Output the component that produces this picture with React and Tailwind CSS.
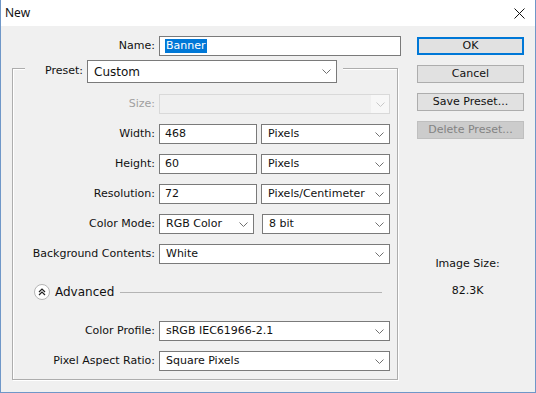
const font = { fontFamily: '"DejaVu Sans", sans-serif' }

function Chevron({ disabled }) {
  return (
    <svg width="9" height="5" viewBox="0 0 9 5" className="shrink-0">
      <path d="M0.5 0.5 L4.5 4.5 L8.5 0.5" fill="none" stroke={disabled ? '#c8c8c8' : '#707070'} strokeWidth="1" />
    </svg>
  )
}

function Select({ value, className = '' }) {
  return (
    <div className={`flex h-[20px] items-center justify-between border border-[#7a7a7a] bg-white pl-[6px] pr-[5px] ${className}`}>
      <span>{value}</span>
      <Chevron />
    </div>
  )
}

function Input({ value, className = '' }) {
  return (
    <div className={`flex h-[20px] items-center border border-[#7a7a7a] bg-white pl-[5px] ${className}`}>
      {value}
    </div>
  )
}

function Row({ label, children, muted }) {
  return (
    <div className="flex items-center gap-[4px]">
      <div className={`w-[142px] text-right ${muted ? 'text-[#a0a0a0]' : ''}`}>{label}</div>
      {children}
    </div>
  )
}

function Button({ children, primary, disabled }) {
  return (
    <div
      className={`flex h-[18px] items-center justify-center ${
        primary
          ? 'border-2 border-[#0078d7] bg-[#e1e1e1]'
          : disabled
          ? 'border border-[#bfbfbf] bg-[#cccccc] text-[#838383]'
          : 'border border-[#adadad] bg-[#e1e1e1]'
      }`}
    >
      {children}
    </div>
  )
}

export default function App() {
  return (
    <div className="h-[393px] w-[536px] overflow-hidden border border-t-0 border-[#6f97c8] bg-[#f0f0f0] text-[11px] text-[#111]" style={font}>
      <div className="flex h-[26px] items-center justify-between bg-white pl-[4px] pr-[10px] text-[12px] font-['Noto_Sans',sans-serif]">
        <span>New</span>
        <svg width="11" height="11" viewBox="0 0 11 11">
          <path d="M0.5 0.5 L10.5 10.5 M10.5 0.5 L0.5 10.5" stroke="#111" strokeWidth="1" />
        </svg>
      </div>

      <div className="flex pt-[10px]">
        <div className="w-[400px]">
          <div className="flex items-center gap-[4px]">
            <div className="w-[154px] text-right">Name:</div>
            <div className="flex h-[20px] w-[242px] items-center border border-[#7a7a7a] bg-white pl-[5px]">
              <span className="bg-[#0078d7] px-px leading-[14px] text-white">Banner</span>
            </div>
          </div>

          <div className="relative z-10 ml-[24px] mt-[4px] flex w-[318px] items-center gap-[4px] bg-[#f0f0f0]">
            <div className="w-[58px] text-right">Preset:</div>
            <div className="flex h-[23px] w-[250px] items-center justify-between border border-[#7a7a7a] bg-white pl-[6px] pr-[5px] text-[12px]">
              <span>Custom</span>
              <Chevron />
            </div>
          </div>

          <div className="-mt-[15px] ml-[11px] h-[312px] w-[386px] border border-[#adadad] pt-[25px] shadow-[inset_1px_1px_0_#fff,1px_1px_0_#fff]">
            <div className="flex flex-col gap-[10px]">
              <Row label="Size:" muted>
                <div className="flex h-[20px] w-[231px] items-center justify-end border border-[#d9d9d9] bg-[#f0f0f0]">
                  <div className="flex h-full w-[18px] items-center justify-center bg-[#f7f7f7]">
                    <Chevron disabled />
                  </div>
                </div>
              </Row>
              <Row label="Width:">
                <Input value="468" className="w-[98px]" />
                <Select value="Pixels" className="w-[129px]" />
              </Row>
              <Row label="Height:">
                <Input value="60" className="w-[98px]" />
                <Select value="Pixels" className="w-[129px]" />
              </Row>
              <Row label="Resolution:">
                <Input value="72" className="w-[98px]" />
                <Select value="Pixels/Centimeter" className="w-[129px]" />
              </Row>
              <Row label="Color Mode:">
                <Select value="RGB Color" className="w-[95px]" />
                <Select value="8 bit" className="ml-[4px] w-[128px]" />
              </Row>
              <Row label="Background Contents:">
                <Select value="White" className="w-[231px]" />
              </Row>
            </div>

            <div className="mt-[18px] flex h-[20px] items-center pl-[21px] pr-[15px]">
              <div className="flex h-[16px] w-[16px] items-center justify-center rounded-full border border-[#b5b5b5] bg-white">
                <svg width="8" height="8" viewBox="0 0 8 8">
                  <path d="M1 4 L4 1 L7 4 M1 7 L4 4 L7 7" fill="none" stroke="#222" strokeWidth="1.2" />
                </svg>
              </div>
              <span className="ml-[5px] text-[12px]">Advanced</span>
              <div className="ml-[6px] h-px flex-1 bg-[#b4b4b4]" />
            </div>

            <div className="mt-[19px] flex flex-col gap-[10px]">
              <Row label="Color Profile:">
                <Select value="sRGB IEC61966-2.1" className="w-[231px]" />
              </Row>
              <Row label="Pixel Aspect Ratio:">
                <Select value="Square Pixels" className="w-[231px]" />
              </Row>
            </div>
          </div>
        </div>

        <div className="ml-[16px] w-[107px] pt-px">
          <div className="flex flex-col gap-[10px]">
            <Button primary>OK</Button>
            <Button>Cancel</Button>
            <Button>Save Preset...</Button>
            <Button disabled>Delete Preset...</Button>
          </div>
          <div className="mt-[117px] flex flex-col items-center gap-[10px] pr-[6px]">
            <span>Image Size:</span>
            <span>82.3K</span>
          </div>
        </div>
      </div>
    </div>
  )
}
